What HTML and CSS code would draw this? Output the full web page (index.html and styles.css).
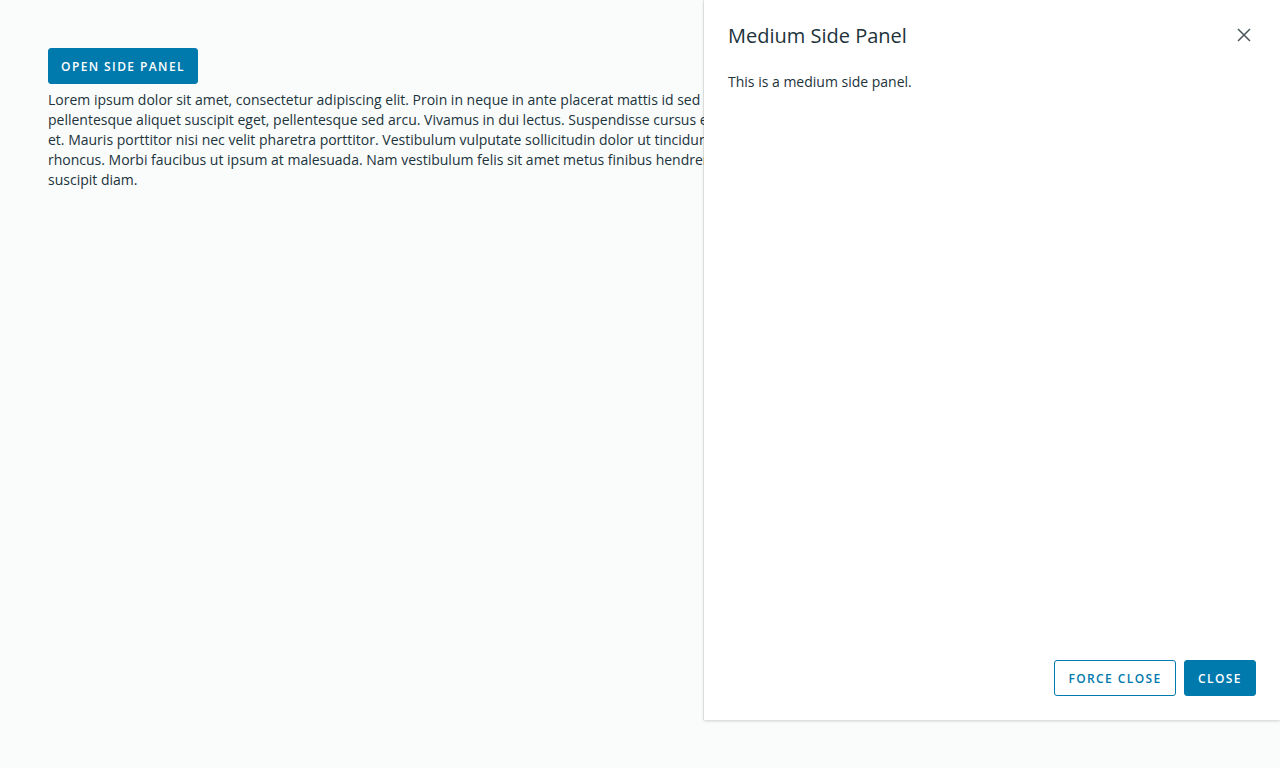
FILE: index.html
```html
<!DOCTYPE html>
<html>
<head>
<meta charset="utf-8">
<link rel="stylesheet" href="styles.css">
</head>
<body>
<main class="content">
  <button class="btn btn-primary">Open side panel</button>
  <p class="lorem">Lorem ipsum dolor sit amet, consectetur adipiscing elit. Proin in neque in ante placerat mattis id sed quam. Proin rhoncus lacus et tempor dignissim. Vivamus sem quam,<br>pellentesque aliquet suscipit eget, pellentesque sed arcu. Vivamus in dui lectus. Suspendisse cursus est ac nisl imperdiet sagittis. Aenean ac sem eu nulla semper<br>et. Mauris porttitor nisi nec velit pharetra porttitor. Vestibulum vulputate sollicitudin dolor ut tincidunt. Phasellus vitae blandit felis. Nullam posuere<br>rhoncus. Morbi faucibus ut ipsum at malesuada. Nam vestibulum felis sit amet metus finibus hendrerit. Fusce faucibus odio eget ex vulputate rhoncus. Fusce nec<br>suscipit diam.</p>
</main>
<aside class="side-panel">
  <header class="panel-header">
    <h3 class="panel-title">Medium Side Panel</h3>
    <button class="close-x" aria-label="close">
      <svg width="24" height="24" viewBox="0 0 24 24"><path d="M6 6 L18 18 M18 6 L6 18" stroke="#49565c" stroke-width="1.5" fill="none"/></svg>
    </button>
  </header>
  <div class="panel-body">This is a medium side panel.</div>
  <footer class="panel-footer">
    <button class="btn btn-outline">Force close</button>
    <button class="btn btn-primary">Close</button>
  </footer>
</aside>
</body>
</html>
```
FILE: styles.css
```css
html, body {
  margin: 0;
  height: 100%;
}
body {
  background: #fafcfc;
  font-family: "Open Sans", "Liberation Sans", sans-serif;
  color: #21333b;
  overflow: hidden;
}
.content {
  padding: 48px 48px 0 48px;
}
.btn {
  height: 36px;
  padding: 0;
  border-radius: 3px;
  font-family: "Open Sans", sans-serif;
  font-size: 12px;
  font-weight: 600;
  letter-spacing: 1.4px;
  text-transform: uppercase;
  cursor: pointer;
  box-sizing: border-box;
}
.btn-primary {
  background: #0079ad;
  color: #fff;
  border: 1px solid #0079ad;
}
.btn-outline {
  background: #fff;
  color: #0079ad;
  border: 1px solid #0079ad;
}
.content .btn {
  width: 150px;
}
.lorem {
  margin: 6px 0 0 0;
  font-size: 14px;
  line-height: 20px;
  white-space: nowrap;
  overflow: hidden;
}
.side-panel {
  position: absolute;
  top: 0;
  right: 0;
  width: 576px;
  height: 720px;
  background: #fff;
  box-shadow: 0 1px 3px rgba(0,0,0,0.18), -1px 0 0 rgba(0,0,0,0.06);
  display: flex;
  flex-direction: column;
  box-sizing: border-box;
  padding: 0 24px 24px 24px;
}
.panel-header {
  display: flex;
  align-items: center;
  justify-content: space-between;
  height: 72px;
  margin-top: -1px;
}
.panel-title {
  margin: 0;
  font-size: 20px;
  font-weight: 400;
  color: #21333b;
}
.close-x {
  background: none;
  border: 0;
  padding: 0;
  width: 24px;
  height: 24px;
  cursor: pointer;
  display: flex;
}
.panel-body {
  flex: 1;
  font-size: 14px;
  line-height: 20px;
  margin-top: 1px;
}
.panel-footer {
  display: flex;
  justify-content: flex-end;
  gap: 8px;
}
.panel-footer .btn-outline { width: 122px; }
.panel-footer .btn-primary { width: 72px; }
```
